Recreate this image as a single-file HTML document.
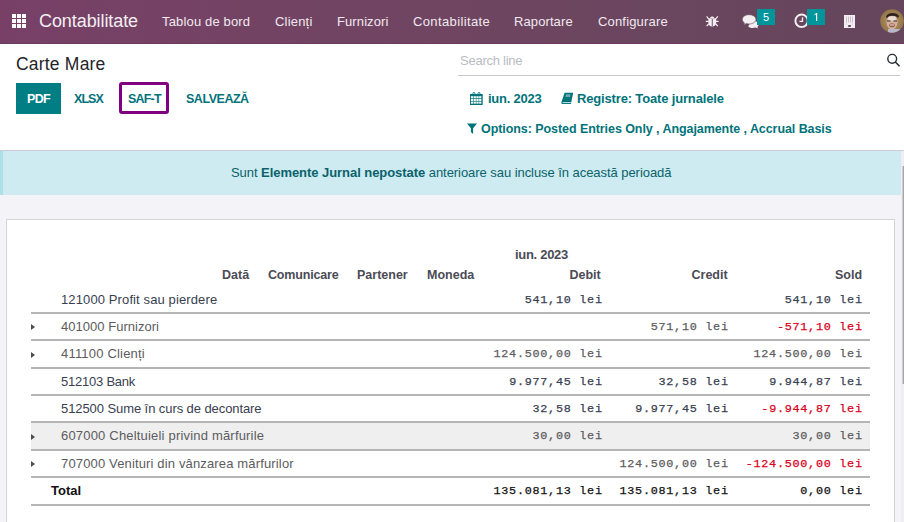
<!DOCTYPE html>
<html><head><meta charset="utf-8">
<style>
*{box-sizing:border-box}
html,body{margin:0;padding:0}
body{width:904px;height:522px;overflow:hidden;position:relative;background:#f4f3f7;font-family:"Liberation Sans",sans-serif;color:#212529}
.a{position:absolute;white-space:nowrap;line-height:1}
.nav{position:absolute;left:0;top:0;width:904px;height:44px;background:linear-gradient(90deg,#784067 0%,#6f4561 50%,#65465c 100%);border-bottom:1px solid #6a3a5e}
.nav .m{color:#f1e9ef;font-size:13px}
.cp{position:absolute;left:0;top:44px;width:904px;height:107px;background:#fff;border-bottom:1px solid #cfcbd3}
.teal{color:#01737a}
.b{font-weight:700}
.alert{position:absolute;left:0;top:151px;width:901px;height:44px;background:#cdebf0;border-left:3px solid #aee0e8}
.card{position:absolute;left:6px;top:219px;width:889px;height:320px;background:#fff;border:1px solid #d3d3d8}
.hl{position:absolute;left:31px;width:839px;height:2px;background:#b5b5b5}
.num{font-family:"Liberation Mono",monospace;font-size:11.8px;font-weight:400;letter-spacing:0.72px;margin-right:-0.72px;margin-top:1.5px;-webkit-text-stroke:0.25px currentColor}
.dk{color:#384050}
.lt{color:#5c5c5e}
.red{color:#d9001b}
.car{position:absolute;left:31px;width:0;height:0;border-left:4.5px solid #4d4d4d;border-top:3.7px solid transparent;border-bottom:3.7px solid transparent}
.badge{position:absolute;background:#00959a;color:#fff;font-size:11px;font-weight:400;text-align:center}
</style></head><body>
<div class="nav">
  <svg class="a" style="left:12px;top:14px" width="14" height="14" viewBox="0 0 14 14" fill="#fff">
    <rect x="0" y="0" width="4" height="4"/><rect x="5" y="0" width="4" height="4"/><rect x="10" y="0" width="4" height="4"/>
    <rect x="0" y="5" width="4" height="4"/><rect x="5" y="5" width="4" height="4"/><rect x="10" y="5" width="4" height="4"/>
    <rect x="0" y="10" width="4" height="4"/><rect x="5" y="10" width="4" height="4"/><rect x="10" y="10" width="4" height="4"/>
  </svg>
  <div class="a" style="left:39px;top:12px;font-size:18px;letter-spacing:-0.08px;color:#f4eef2">Contabilitate</div>
  <div class="a m" style="left:162px;top:15px;letter-spacing:0.16px">Tablou de bord</div>
  <div class="a m" style="left:275px;top:15px;letter-spacing:0.2px">Clienți</div>
  <div class="a m" style="left:337px;top:15px;letter-spacing:0.1px">Furnizori</div>
  <div class="a m" style="left:413px;top:15px;letter-spacing:0.37px">Contabilitate</div>
  <div class="a m" style="left:514px;top:15px;letter-spacing:0.1px">Raportare</div>
  <div class="a m" style="left:598px;top:15px;letter-spacing:0.17px">Configurare</div>
  <!-- bug -->
  <svg class="a" style="left:705px;top:14px" width="14" height="14" viewBox="0 0 14 14">
    <path d="M5.2 4 C5.2 2 9.2 2 9.2 4 Z" fill="#f1eaf0"/>
    <path d="M3.3 4.3 H11.1 V9 C11.1 11.3 9.4 12.4 7.2 12.4 C5 12.4 3.3 11.3 3.3 9 Z" fill="#f4eef2"/>
    <rect x="6.8" y="5" width="0.9" height="7.2" fill="#6a4460"/>
    <path d="M1.6 2.4 L3.6 4.8 M12.8 2.4 L10.8 4.8 M0.8 7.4 H3.4 M13.6 7.4 H11 M1.6 12.2 L3.6 10 M12.8 12.2 L10.8 10" stroke="#f4eef2" stroke-width="1.2"/>
  </svg>
  <!-- comments -->
  <svg class="a" style="left:742px;top:14px" width="17" height="15" viewBox="0 0 17 15">
    <path d="M10 6 C14 6.5 17 8.5 16.6 11 C16.4 12 15.8 12.6 15.2 13 L16.2 14.6 L13.4 13.6 C12.6 13.9 11.6 14 10.6 14 C8.6 14 7 13.3 6.2 12.2 L10 6Z" fill="#f4eef2"/>
    <path d="M7 0.7 C10.7 0.7 14 2.8 14 5.4 C14 8 10.7 10 7 10 C6 10 5 9.9 4.2 9.6 L1.8 11.2 L2.4 8.9 C1.2 8 0.3 6.8 0.3 5.4 C0.3 2.8 3.3 0.7 7 0.7Z" fill="#f4eef2" stroke="#5e3f56" stroke-width="0.6"/>
  </svg>
  <div class="badge" style="left:757px;top:9px;width:18px;height:16px;line-height:16px">5</div>
  <!-- clock -->
  <svg class="a" style="left:794px;top:13px" width="15" height="16" viewBox="0 0 15 16">
    <circle cx="7.6" cy="7.8" r="6.2" fill="none" stroke="#f4eef2" stroke-width="2"/>
    <path d="M8.5 4.2 V8.3 H5.4" fill="none" stroke="#f4eef2" stroke-width="1.3"/>
  </svg>
  <div class="badge" style="left:807px;top:9px;width:18px;height:16px;line-height:16px"><svg style="position:absolute;left:7px;top:4px" width="4" height="8" viewBox="0 0 4 8"><path d="M2.6 0 V8" stroke="#fff" stroke-width="1.2"/><path d="M3.1 0.2 L0.4 1.8" stroke="#fff" stroke-width="1"/></svg></div>
  <!-- building -->
  <svg class="a" style="left:844px;top:15px" width="11" height="13" viewBox="0 0 11 13">
    <rect x="0" y="0" width="11" height="13" fill="#f4eef2"/>
    <g fill="#cdbfc9"><rect x="2" y="1.5" width="1" height="6"/><rect x="4" y="1.5" width="1" height="6"/><rect x="6" y="1.5" width="1" height="6"/><rect x="8" y="1.5" width="1" height="6"/>
    <rect x="2" y="8.5" width="1" height="1"/><rect x="8" y="8.5" width="1" height="1"/></g>
    <ellipse cx="5.5" cy="11" rx="1.7" ry="1" fill="#5e3f56"/>
  </svg>
  <!-- avatar -->
  <svg class="a" style="left:880px;top:9px" width="24" height="24" viewBox="0 0 24 24">
    <defs><clipPath id="cc"><circle cx="12" cy="12" r="11.8"/></clipPath>
    <radialGradient id="bg" cx="0.5" cy="0.5" r="0.6"><stop offset="0" stop-color="#b89a6a"/><stop offset="1" stop-color="#8a6c40"/></radialGradient></defs>
    <g clip-path="url(#cc)">
      <rect width="24" height="24" fill="url(#bg)"/>
      <ellipse cx="12" cy="13" rx="5.5" ry="7.5" fill="#d2b2a0"/>
      <path d="M6 8 C7 3 17 3 19 7 L18 9 C16 6 9 6 7 9 Z" fill="#2e221c"/>
      <ellipse cx="12" cy="9.5" rx="4" ry="2.2" fill="#e8dcd4"/>
      <ellipse cx="12" cy="16.2" rx="2.8" ry="2" fill="#9a5a48"/>
      <path d="M10 16 H14" stroke="#f0e6e0" stroke-width="1"/>
      <path d="M7 12 H10.5 M13.5 12 H17" stroke="#3a2a22" stroke-width="1"/>
      <rect x="8" y="20" width="12" height="6" fill="#b8b8c8"/>
    </g>
  </svg>
</div>

<div class="cp">
  <div class="a" style="left:16px;top:11.5px;font-size:17.5px;letter-spacing:0.2px;color:#1f2428">Carte Mare</div>
  <div class="a" style="left:16px;top:39px;width:45px;height:31px;background:#017e84"></div>
  <div class="a b" style="left:27px;top:49px;font-size:12.5px;letter-spacing:-0.7px;color:#fff">PDF</div>
  <div class="a b teal" style="left:74px;top:49px;font-size:12.5px;letter-spacing:-0.95px">XLSX</div>
  <div class="a" style="left:119px;top:38px;width:50px;height:32px;border:3px solid #800080;border-radius:3px"></div>
  <div class="a b teal" style="left:128px;top:49px;font-size:12.5px;letter-spacing:-0.8px">SAF-T</div>
  <div class="a b teal" style="left:186px;top:49px;font-size:12.5px;letter-spacing:-0.47px">SALVEAZĂ</div>

  <div class="a" style="left:460px;top:10px;font-size:13px;letter-spacing:-0.25px;color:#b9bbc2">Search line</div>
  <div class="a" style="left:458px;top:31px;width:442px;height:1px;background:#c4c7cc"></div>
  <svg class="a" style="left:886px;top:9px" width="15" height="15" viewBox="0 0 15 15">
    <circle cx="6.2" cy="5.8" r="4.4" fill="none" stroke="#2a2d36" stroke-width="1.4"/>
    <path d="M9.3 9 L13.6 13.3" stroke="#2a2d36" stroke-width="1.6"/>
  </svg>

  <!-- calendar -->
  <svg class="a" style="left:470px;top:48px" width="13" height="13" viewBox="0 0 13 13">
    <rect x="0" y="1.9" width="12.7" height="11.1" rx="0.5" fill="#01737a"/>
    <rect x="0.90" y="4.20" width="2.2" height="2.05" fill="#fff"/><rect x="3.65" y="4.20" width="2.2" height="2.05" fill="#fff"/><rect x="6.40" y="4.20" width="2.2" height="2.05" fill="#fff"/><rect x="9.15" y="4.20" width="2.2" height="2.05" fill="#fff"/><rect x="0.90" y="6.90" width="2.2" height="2.05" fill="#fff"/><rect x="3.65" y="6.90" width="2.2" height="2.05" fill="#fff"/><rect x="6.40" y="6.90" width="2.2" height="2.05" fill="#fff"/><rect x="9.15" y="6.90" width="2.2" height="2.05" fill="#fff"/><rect x="0.90" y="9.60" width="2.2" height="2.05" fill="#fff"/><rect x="3.65" y="9.60" width="2.2" height="2.05" fill="#fff"/><rect x="6.40" y="9.60" width="2.2" height="2.05" fill="#fff"/><rect x="9.15" y="9.60" width="2.2" height="2.05" fill="#fff"/>
    <rect x="2.9" y="0.4" width="1.9" height="3" rx="0.9" fill="none" stroke="#01737a" stroke-width="0.9"/>
    <rect x="8" y="0.4" width="1.9" height="3" rx="0.9" fill="none" stroke="#01737a" stroke-width="0.9"/>
  </svg>
  <div class="a b teal" style="left:488px;top:48px;font-size:13px;letter-spacing:-0.25px">iun. 2023</div>
  <!-- book -->
  <svg class="a" style="left:561px;top:48px" width="13" height="12" viewBox="0 0 13 12">
    <path d="M3.6 0.8 H12.2 L9.9 11.9 H1.2 C0.3 11.9 0.2 11 0.5 10 Z" fill="#01737a"/>
    <path d="M1.6 10.6 H9.9" stroke="#fff" stroke-width="0.8"/>
    <path d="M5 2.3 H9.5 L9 5 H4.5 Z" fill="#6fa9ad"/>
  </svg>
  <div class="a b teal" style="left:577px;top:48px;font-size:13px;letter-spacing:-0.16px">Registre: Toate jurnalele</div>
  <!-- filter -->
  <svg class="a" style="left:467px;top:79px" width="10" height="11" viewBox="0 0 10 11">
    <path d="M0 0.4 H10 L6.1 5.2 V10.9 L3.9 8.9 V5.2 Z" fill="#01737a"/>
  </svg>
  <div class="a b teal" style="left:481px;top:79px;font-size:12.5px;letter-spacing:-0.07px">Options: Posted Entries Only , Angajamente , Accrual Basis</div>
</div>

<div class="alert"></div>
<div class="a" style="left:231px;top:166px;font-size:13px;letter-spacing:-0.055px;color:#0a626c">Sunt <b>Elemente Jurnal nepostate</b> anterioare sau incluse în această perioadă</div>
<div class="a" style="left:901px;top:151px;width:3px;height:371px;background:#efeff2"></div>
<div class="a" style="left:902px;top:166px;width:1px;height:218px;background:#cfcfd2"></div>
<div class="a" style="left:903px;top:166px;width:1px;height:218px;background:#a6a6a8"></div>

<div class="card"></div>

<!-- header -->
<div class="a b" style="left:515px;top:248px;font-size:13px;letter-spacing:-0.3px;color:#4b4b55">iun. 2023</div>
<div class="a b" style="left:222px;top:269px;font-size:12.5px;color:#4b4b55">Dată</div>
<div class="a b" style="left:268px;top:269px;font-size:12.5px;letter-spacing:-0.17px;color:#4b4b55">Comunicare</div>
<div class="a b" style="left:357px;top:269px;font-size:12.5px;color:#4b4b55">Partener</div>
<div class="a b" style="left:427px;top:269px;font-size:12.5px;color:#4b4b55">Moneda</div>
<div class="a b" style="left:569.5px;top:269px;font-size:12.5px;color:#4b4b55">Debit</div>
<div class="a b" style="left:691.5px;top:269px;font-size:12.5px;color:#4b4b55">Credit</div>
<div class="a b" style="left:835px;top:269px;font-size:12.5px;color:#4b4b55">Sold</div>

<!-- rows -->
<div class="a" style="left:31px;top:423px;width:839px;height:26px;background:#efefef"></div>
<div class="hl" style="top:312px"></div>
<div class="hl" style="top:339px"></div>
<div class="hl" style="top:367px"></div>
<div class="hl" style="top:394px"></div>
<div class="hl" style="top:421px"></div>
<div class="hl" style="top:449px"></div>
<div class="hl" style="top:476px"></div>
<div class="hl" style="top:504px"></div>

<div class="car" style="top:324px"></div>
<div class="car" style="top:352px"></div>
<div class="car" style="top:434px"></div>
<div class="car" style="top:461px"></div>

<div class="a dk" style="left:61px;top:293px;font-size:13px;letter-spacing:0.116px">121000 Profit sau pierdere</div>
<div class="a lt" style="left:61px;top:320px;font-size:13px;letter-spacing:0.03px">401000 Furnizori</div>
<div class="a lt" style="left:61px;top:347px;font-size:13px;letter-spacing:0.19px">411100 Clienți</div>
<div class="a dk" style="left:61px;top:375px;font-size:13px;letter-spacing:-0.23px">512103 Bank</div>
<div class="a dk" style="left:61px;top:402px;font-size:13px;letter-spacing:-0.08px">512500 Sume în curs de decontare</div>
<div class="a lt" style="left:61px;top:429px;font-size:13px;letter-spacing:0.19px">607000 Cheltuieli privind mărfurile</div>
<div class="a lt" style="left:61px;top:457px;font-size:13px;letter-spacing:0.15px">707000 Venituri din vânzarea mărfurilor</div>
<div class="a b" style="left:51px;top:484px;font-size:13px;color:#111">Total</div>

<!-- amounts: right aligned -->
<div class="a num dk" style="right:302px;top:293px">541,10 lei</div>
<div class="a num dk" style="right:42px;top:293px">541,10 lei</div>

<div class="a num lt" style="right:176px;top:320px">571,10 lei</div>
<div class="a num red" style="right:42px;top:320px">-571,10 lei</div>

<div class="a num lt" style="right:302px;top:347px">124.500,00 lei</div>
<div class="a num lt" style="right:42px;top:347px">124.500,00 lei</div>

<div class="a num dk" style="right:302px;top:375px">9.977,45 lei</div>
<div class="a num dk" style="right:176px;top:375px">32,58 lei</div>
<div class="a num dk" style="right:42px;top:375px">9.944,87 lei</div>

<div class="a num dk" style="right:302px;top:402px">32,58 lei</div>
<div class="a num dk" style="right:176px;top:402px">9.977,45 lei</div>
<div class="a num red" style="right:42px;top:402px">-9.944,87 lei</div>

<div class="a num lt" style="right:302px;top:429px">30,00 lei</div>
<div class="a num lt" style="right:42px;top:429px">30,00 lei</div>

<div class="a num lt" style="right:176px;top:457px">124.500,00 lei</div>
<div class="a num red" style="right:42px;top:457px">-124.500,00 lei</div>

<div class="a num" style="right:302px;top:484px;color:#111">135.081,13 lei</div>
<div class="a num" style="right:176px;top:484px;color:#111">135.081,13 lei</div>
<div class="a num" style="right:42px;top:484px;color:#111">0,00 lei</div>

</body></html>
